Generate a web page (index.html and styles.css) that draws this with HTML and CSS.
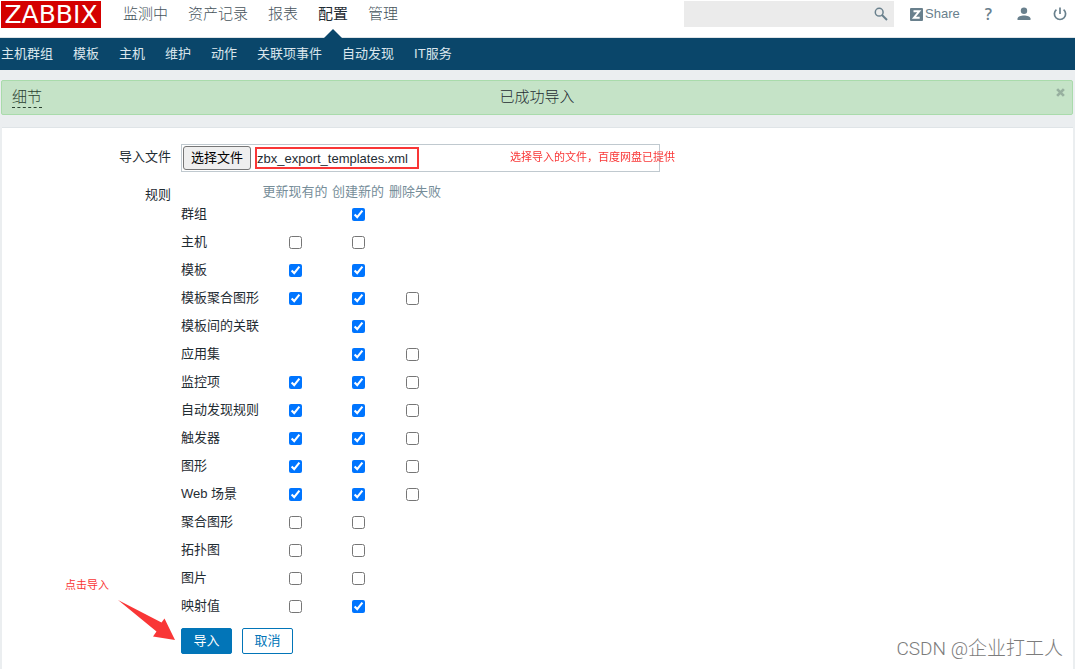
FILE: index.html
```html
<!DOCTYPE html>
<html lang="zh-CN">
<head>
<meta charset="utf-8">
<title>Zabbix: 导入</title>
<link rel="stylesheet" href="styles.css">
</head>
<body>
<header class="top">
  <a class="logo" href="#">ZABBIX</a>
  <nav class="main-nav">
    <a href="#">监测中</a>
    <a href="#">资产记录</a>
    <a href="#">报表</a>
    <a class="selected" href="#">配置</a>
    <a href="#">管理</a>
  </nav>
  <form class="search">
    <input type="search" aria-label="搜索">
    <button type="button" aria-label="搜索"><svg width="14" height="14" viewBox="0 0 14 14"><circle cx="5.2" cy="5.2" r="3.9" fill="none" stroke="#69808d" stroke-width="1.5"/><path d="M8 8l5 5" stroke="#69808d" stroke-width="2"/></svg></button>
  </form>
  <div class="tools">
    <a class="share" href="#"><svg width="13" height="13" viewBox="0 0 13 13"><rect width="13" height="13" rx="1" fill="#69808d"/><path d="M3.5 3.3h5.7L4 9.7h5.7" fill="none" stroke="#fff" stroke-width="2"/></svg>Share</a>
    <a class="help" href="#">?</a>
    <a class="icon" href="#" aria-label="用户"><svg width="14" height="14" viewBox="0 0 14 14"><circle cx="7" cy="3.7" r="3.2" fill="#69808d"/><path d="M.5 13v-1.5C.5 9.500 4 8.400 7 8.400s6.500 1.100 6.500 3.100V13z" fill="#69808d"/></svg></a>
    <a class="icon" href="#" aria-label="退出"><svg width="14" height="14" viewBox="0 0 14 14"><path d="M3.400 2.600a5.600 5.600 0 1 0 7.200 0M7 .5v6.500" fill="none" stroke="#69808d" stroke-width="1.700"/></svg></a>
  </div>
</header>
<nav class="sub-nav">
  <a href="#">主机群组</a>
  <a href="#">模板</a>
  <a href="#">主机</a>
  <a href="#">维护</a>
  <a href="#">动作</a>
  <a href="#">关联项事件</a>
  <a href="#">自动发现</a>
  <a href="#">IT服务</a>
</nav>
<div class="message" role="status">
  <a class="details" href="#">细节</a>
  <span class="message-text">已成功导入</span>
  <button class="close" type="button" aria-label="关闭"><svg width="9" height="9" viewBox="0 0 8 8"><path d="M1 1l6 6M7 1L1 7" stroke="#97b09f" stroke-width="2.400"/></svg></button>
</div>
<main class="panel">
  <form class="import">
    <label class="caption" for="file">导入文件</label>
    <div class="file">
      <input id="file" type="file">
      <button type="button">选择文件</button>
      <span class="filename">zbx_export_templates.xml</span>
      <span class="note file-note">选择导入的文件，百度网盘已提供</span>
    </div>
    <span class="caption rules-caption" id="rules">规则</span>
    <table class="rules" aria-labelledby="rules">
      <colgroup><col class="name"><col class="update"><col class="create"><col class="delete"></colgroup>
      <thead><tr><td></td><th>更新现有的</th><th>创建新的</th><th class="delete-head">删除失败</th></tr></thead>
      <tbody>
        <tr><th>群组</th><td></td><td><input type="checkbox" aria-label="群组 创建新的" checked></td><td></td></tr>
        <tr><th>主机</th><td><input type="checkbox" aria-label="主机 更新现有的"></td><td><input type="checkbox" aria-label="主机 创建新的"></td><td></td></tr>
        <tr><th>模板</th><td><input type="checkbox" aria-label="模板 更新现有的" checked></td><td><input type="checkbox" aria-label="模板 创建新的" checked></td><td></td></tr>
        <tr><th>模板聚合图形</th><td><input type="checkbox" aria-label="模板聚合图形 更新现有的" checked></td><td><input type="checkbox" aria-label="模板聚合图形 创建新的" checked></td><td><input type="checkbox" aria-label="模板聚合图形 删除失败"></td></tr>
        <tr><th>模板间的关联</th><td></td><td><input type="checkbox" aria-label="模板间的关联 创建新的" checked></td><td></td></tr>
        <tr><th>应用集</th><td></td><td><input type="checkbox" aria-label="应用集 创建新的" checked></td><td><input type="checkbox" aria-label="应用集 删除失败"></td></tr>
        <tr><th>监控项</th><td><input type="checkbox" aria-label="监控项 更新现有的" checked></td><td><input type="checkbox" aria-label="监控项 创建新的" checked></td><td><input type="checkbox" aria-label="监控项 删除失败"></td></tr>
        <tr><th>自动发现规则</th><td><input type="checkbox" aria-label="自动发现规则 更新现有的" checked></td><td><input type="checkbox" aria-label="自动发现规则 创建新的" checked></td><td><input type="checkbox" aria-label="自动发现规则 删除失败"></td></tr>
        <tr><th>触发器</th><td><input type="checkbox" aria-label="触发器 更新现有的" checked></td><td><input type="checkbox" aria-label="触发器 创建新的" checked></td><td><input type="checkbox" aria-label="触发器 删除失败"></td></tr>
        <tr><th>图形</th><td><input type="checkbox" aria-label="图形 更新现有的" checked></td><td><input type="checkbox" aria-label="图形 创建新的" checked></td><td><input type="checkbox" aria-label="图形 删除失败"></td></tr>
        <tr><th>Web 场景</th><td><input type="checkbox" aria-label="Web 场景 更新现有的" checked></td><td><input type="checkbox" aria-label="Web 场景 创建新的" checked></td><td><input type="checkbox" aria-label="Web 场景 删除失败"></td></tr>
        <tr><th>聚合图形</th><td><input type="checkbox" aria-label="聚合图形 更新现有的"></td><td><input type="checkbox" aria-label="聚合图形 创建新的"></td><td></td></tr>
        <tr><th>拓扑图</th><td><input type="checkbox" aria-label="拓扑图 更新现有的"></td><td><input type="checkbox" aria-label="拓扑图 创建新的"></td><td></td></tr>
        <tr><th>图片</th><td><input type="checkbox" aria-label="图片 更新现有的"></td><td><input type="checkbox" aria-label="图片 创建新的"></td><td></td></tr>
        <tr><th>映射值</th><td><input type="checkbox" aria-label="映射值 更新现有的"></td><td><input type="checkbox" aria-label="映射值 创建新的" checked></td><td></td></tr>
      </tbody>
    </table>
    <div class="actions">
      <button class="primary" type="submit">导入</button>
      <button class="secondary" type="button">取消</button>
      <span class="note click-note">点击导入</span>
      <svg class="arrow" width="58" height="42" viewBox="0 0 58 42"><path d="M0 0L43.500 22.500 46.500 18.500 57 40 35 36.500 38.500 31.500z" fill="#f93636"/></svg>
    </div>
  </form>
  <span class="watermark">CSDN @企业打工人</span>
</main>
</body>
</html>
```
FILE: styles.css
```css
* { box-sizing: border-box; }
html { background: #fff; }
body {
  margin: 0 3px 0 0;
  min-height: 100vh;
  display: flex;
  flex-direction: column;
  background: #ebeef0;
  color: #1f2c33;
  font: 13px/20px "Liberation Sans", "Noto Sans CJK SC", sans-serif;
}
a { color: inherit; text-decoration: none; }
button, input { font: inherit; }
svg { display: block; }

.top {
  display: flex;
  align-items: flex-start;
  height: 38px;
  padding: 1px 0 0 1px;
  background: #fff;
  border-bottom: 1px solid #dfe4e7;
}
.logo {
  width: 100px;
  height: 27px;
  background: #d40000;
  color: #fff;
  font: 25px/27px "DejaVu Sans", sans-serif;
  text-align: center;
}
.main-nav {
  display: flex;
  gap: 20px;
  height: 37px;
  margin-left: 22px;
  color: #46535b;
  font-size: 15px;
  font-weight: 300;
  line-height: 26px;
}
.main-nav .selected { position: relative; color: #1f2c33; font-weight: 400; }
.selected::after {
  content: "";
  position: absolute;
  left: 50%;
  bottom: 0;
  margin-left: -9px;
  border: 9px solid transparent;
  border-top: 0;
  border-bottom-color: #0a466a;
}
.search {
  display: flex;
  align-items: center;
  width: 210px;
  height: 26px;
  margin-left: auto;
  padding-right: 6px;
  background: #ebebeb;
}
.search input { flex: 1; min-width: 0; border: 0; background: none; }
.search button, .close { padding: 0; border: 0; background: none; }
.tools {
  display: flex;
  align-items: center;
  height: 26px;
  margin-left: 16px;
  padding-right: 8px;
  color: #69808d;
}
.share { display: flex; align-items: center; gap: 2px; }
.help { margin: 0 25px; font: 16px/20px "Open Sans", sans-serif; font-weight: 600; }
.icon + .icon { margin-left: 22px; }

.sub-nav {
  display: flex;
  gap: 20px;
  height: 32px;
  padding-left: 1px;
  background: #0a466a;
  color: #dbe6ed;
  line-height: 32px;
}

.message {
  position: relative;
  display: grid;
  grid-template-columns: 1fr auto 1fr;
  margin: 10px 2px 12px 1px;
  padding: 5px 10px 6px;
  background: #c5e3c7;
  border: 1px solid #a9dbab;
  border-radius: 2px;
  color: #2b4030;
  font-size: 15px;
  line-height: 21px;
}
.message-text { font-weight: 300; color: #1f2c33; }
.details { justify-self: start; border-bottom: 1px dashed #2b4030; font-weight: 300; }
.close { position: absolute; top: 7px; right: 7px; }

.panel {
  position: relative;
  flex: 1;
  margin: 0 2px 0 2px;
  padding: 16px 0 14px;
  background: #fff;
  border-top: 1px solid #dfe4e7;
}
.import {
  display: grid;
  grid-template-columns: 169px 1fr;
  column-gap: 10px;
}
.caption { padding-top: 3px; text-align: right; }
.file {
  position: relative;
  display: flex;
  align-items: center;
  gap: 4px;
  width: 479px;
  height: 28px;
  padding-left: 1px;
  border: 1px solid #c0c9cf;
}
.file input { position: absolute; inset: 0; width: 100%; opacity: 0; }
.file button {
  width: 68px;
  height: 24px;
  padding: 0;
  border: 1px solid #767676;
  border-radius: 3px;
  background: #efefef;
  color: #000;
}
.filename {
  width: 164px;
  height: 22px;
  border: 2px solid #f93636;
  line-height: 20px;
}
.note {
  position: absolute;
  color: #f93636;
  font-size: 11px;
  line-height: 16px;
  white-space: nowrap;
}
.file-note { left: 328px; top: 4px; }
.rules-caption { padding-top: 13px; }
.rules {
  width: 257px;
  margin-top: 11px;
  table-layout: fixed;
  border-collapse: collapse;
}
.rules .name { width: 79px; }
.rules .update { width: 70px; }
.rules .create { width: 56px; }
.rules .delete { width: 52px; }
.rules th, .rules td {
  height: 28px;
  padding: 0;
  font-weight: 400;
  text-align: center;
  white-space: nowrap;
}
.rules tbody th { text-align: left; }
.rules thead th, .rules thead td { height: 17px; line-height: 17px; color: #768d99; }
.rules .delete-head { padding-left: 3px; text-align: left; }
.rules input { display: block; width: 13px; height: 13px; margin: 0 auto; }
.actions {
  position: relative;
  grid-column: 2;
  display: flex;
  gap: 10px;
  margin-top: 8px;
}
.actions button {
  width: 51px;
  height: 26px;
  padding: 0;
  border: 1px solid #0275b8;
  border-radius: 2px;
}
.actions .primary { background: #0275b8; color: #fff; }
.actions .secondary { background: #fff; color: #0275b8; }
.click-note { left: -116px; top: -51px; }
.arrow { position: absolute; left: -63px; top: -28px; }
.watermark {
  position: absolute;
  right: 10px;
  bottom: 6px;
  color: #7c7c7c;
  font: 300 19px/28px Roboto, "Noto Sans CJK SC", sans-serif;
}
```
